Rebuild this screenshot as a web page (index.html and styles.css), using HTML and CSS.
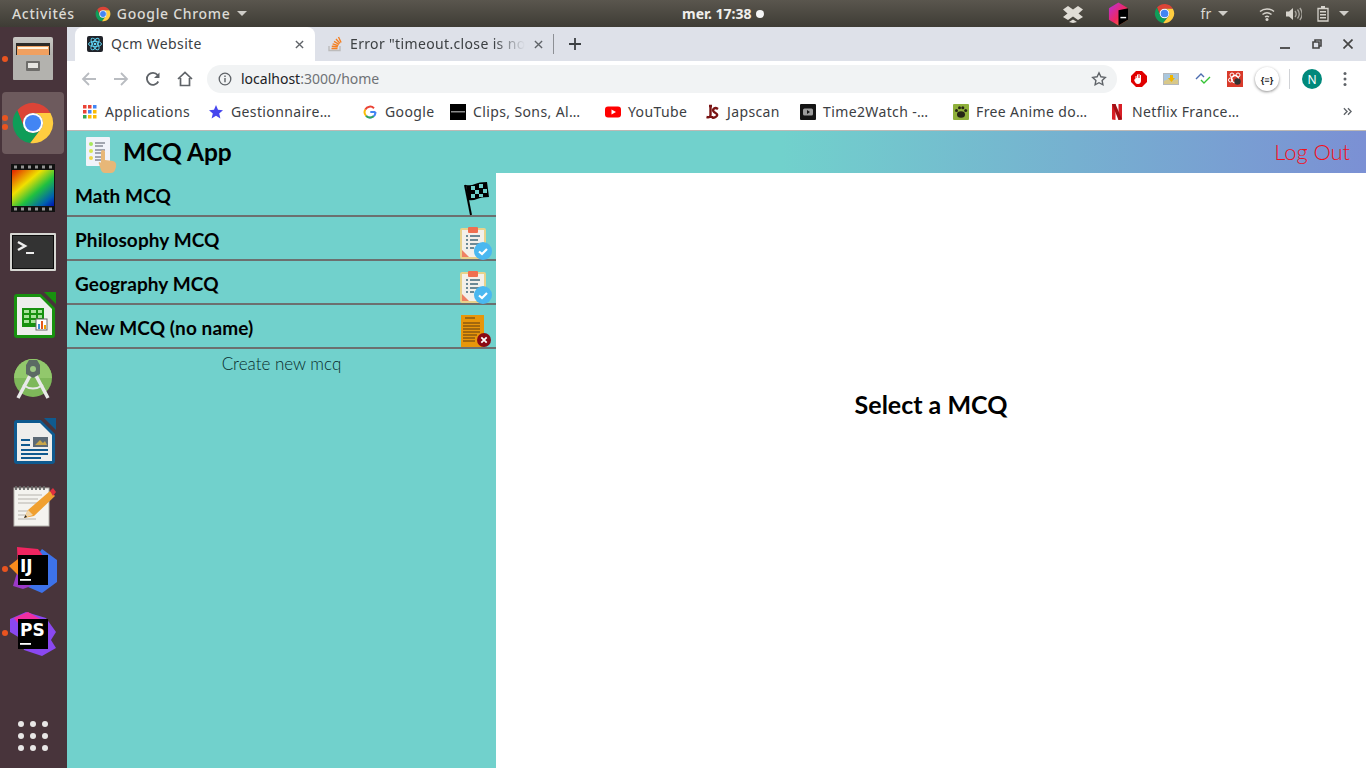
FILE: index.html
```html
<!DOCTYPE html>
<html lang="fr">
<head>
<meta charset="utf-8">
<title>Qcm Website</title>
<link rel="stylesheet" href="styles.css">
</head>
<body>
<svg class="defs" width="0" height="0">
  <symbol id="chrome" viewBox="0 0 48 48">
    <path fill="#db4437" d="M6.900 10.200A22 22 0 0 1 43.050 13H24A11 11 0 0 0 14.500 29.500Z"/>
    <path fill="#0f9d58" d="M6.900 10.200A22 22 0 0 0 21 45.800L33.500 29.500A11 11 0 0 1 14.500 29.500Z"/>
    <path fill="#ffcd40" d="M43.050 13A22 22 0 0 1 21 45.800L33.500 29.500A11 11 0 0 0 24 13Z"/>
    <circle cx="24" cy="24" r="11" fill="#fff"/>
    <circle cx="24" cy="24" r="8.800" fill="#4285f4"/>
  </symbol>
  <symbol id="done" viewBox="0 0 32 34">
    <rect x="0" y="2" width="26" height="31" rx="2" fill="#e8d28b"/>
    <rect x="2" y="4" width="22" height="27" fill="#f3f0ea"/>
    <path fill="#ef8163" d="M2 24l7 7H2z"/>
    <rect x="8" y="1" width="10" height="6" rx="1" fill="#ef6f50"/>
    <path fill="#6c8a96" d="M6 9h2v2H6zM10 9h10v2H10zM6 13h2v2H6zM10 13h8v2h-8zM6 17h2v2H6zM10 17h9v2h-9zM6 21h2v2H6zM10 21h4v2h-4z"/>
    <circle cx="23" cy="25" r="9" fill="#4ab8f0"/>
    <path d="M19 25.500l3 2.500 5-5" fill="none" stroke="#fff" stroke-width="2.200"/>
  </symbol>
</svg>

<header class="topbar">
  <div class="top-left">
    <span class="top-label">Activités</span>
    <span class="top-app"><svg class="ic14"><use href="#chrome"/></svg><span class="top-label">Google Chrome</span><i class="caret"></i></span>
  </div>
  <div class="top-clock">mer. 17:38 <i class="clock-dot"></i></div>
  <div class="top-right">
    <svg class="tray-drop" viewBox="0 0 20 18"><path fill="#e0ddd6" d="M5 1l5 3.500L15 1l5 3.500-4.500 4 4.500 3.500-5 3-5-3.500L5 15l-5-3 4.500-3.500L0 4.500zM10 14.500l4 2.500-4 1-4-1z"/></svg>
    <svg class="tray-tb" viewBox="0 0 22 24"><defs><linearGradient id="tb" x1="0" y1="0" x2="1" y2="1"><stop offset="0" stop-color="#b52fe0"/><stop offset=".55" stop-color="#f0285f"/><stop offset="1" stop-color="#ff9a20"/></linearGradient></defs><path fill="url(#tb)" d="M11 0l10 6v12l-10 6-10-6V6z"/><path fill="#000" d="M11 8l10-2v12l-10 6z"/><rect x="13" y="15" width="6" height="1.500" fill="#fff"/></svg>
    <svg class="tray-chrome"><use href="#chrome"/></svg>
    <span class="tray-lang">fr</span><i class="caret tray-caret1"></i>
    <svg class="tray-wifi" viewBox="0 0 16 14"><path fill="none" stroke="#d6d3cc" stroke-width="1.500" d="M1 4.500C5 1 11 1 15 4.500M3.500 7.500c3-2.400 6-2.400 9 0M6 10c1.300-.9 2.700-.9 4 0"/><circle cx="8" cy="12.500" r="1.500" fill="#d6d3cc"/></svg>
    <svg class="tray-vol" viewBox="0 0 16 14"><path fill="#d6d3cc" d="M0 4.500h3L7 1v12L3 9.500H0z"/><path fill="none" stroke="#a9a69f" stroke-width="1.300" d="M9 4c1.400 1.800 1.400 4.200 0 6M11.500 2.500c2.200 2.800 2.200 6.200 0 9M13.800 1c3 3.800 3 8.200 0 12"/></svg>
    <svg class="tray-bat" viewBox="0 0 12 16"><path fill="none" stroke="#d6d3cc" stroke-width="1.300" d="M1 2.500h10V15H1z"/><path fill="#d6d3cc" d="M4 0h4v2H4zM3 5h6v1.500H3zM3 8h6v1.500H3zM3 11h6v1.500H3z"/></svg>
    <i class="caret tray-caret2"></i>
  </div>
</header>

<div class="desktop">
  <nav class="dock">
    <div class="dock-item"><i class="dot"></i>
      <svg class="dock-ic lift" viewBox="0 0 48 48"><defs><linearGradient id="cab" x1="0" y1="0" x2="0" y2="1"><stop offset="0" stop-color="#c9c8c4"/><stop offset="1" stop-color="#8f8e8a"/></linearGradient></defs><rect x="4" y="2" width="40" height="43" rx="2" fill="url(#cab)"/><rect x="7" y="8" width="34" height="12" fill="#2c2a28"/><rect x="8" y="11" width="32" height="9" fill="#f0a060"/><rect x="9" y="12" width="30" height="2" fill="#fff3df"/><path fill="#b3b2ae" d="M4 20h40v24a1 1 0 0 1-1 1H5a1 1 0 0 1-1-1z"/><rect x="17" y="26" width="14" height="10" rx="1" fill="#6e6d6a"/><rect x="19" y="28" width="10" height="5" fill="#e6e5e1"/></svg>
    </div>
    <div class="dock-item active"><i class="dot"></i><i class="dot second"></i>
      <svg class="dock-chrome"><use href="#chrome"/></svg>
    </div>
    <div class="dock-item">
      <svg class="dock-ic" viewBox="0 0 48 48"><defs><linearGradient id="rb" x1="0" y1="0" x2="1" y2="1"><stop offset="0" stop-color="#e02000"/><stop offset=".35" stop-color="#f0e000"/><stop offset=".6" stop-color="#20c040"/><stop offset=".85" stop-color="#0060b0"/><stop offset="1" stop-color="#0010b0"/></linearGradient></defs><rect x="2" y="0" width="44" height="48" fill="#111"/><rect x="3" y="6" width="42" height="36" fill="url(#rb)"/><path fill="#fff" fill-opacity=".55" d="M5 1.500h3v3H5zM12 1.500h3v3h-3zM19 1.500h3v3h-3zM26 1.500h3v3h-3zM33 1.500h3v3h-3zM40 1.500h3v3h-3zM5 43.500h3v3H5zM12 43.500h3v3h-3zM19 43.500h3v3h-3zM26 43.500h3v3h-3zM33 43.500h3v3h-3zM40 43.500h3v3h-3z"/></svg>
    </div>
    <div class="dock-item">
      <svg class="dock-ic" viewBox="0 0 48 48"><rect x="1" y="5" width="46" height="38" rx="1" fill="#d6d6d2"/><rect x="3" y="7" width="42" height="34" fill="#0c0c0c"/><rect x="4" y="8" width="40" height="32" fill="#333"/><path d="M9 14l7 4-7 4" fill="none" stroke="#eee" stroke-width="2.500"/><rect x="17" y="24" width="8" height="2" fill="#eee"/></svg>
    </div>
    <div class="dock-item">
      <svg class="dock-ic" viewBox="0 0 48 48"><path fill="#18910f" d="M5 5a3 3 0 0 1 3-3h24l14 14v27a3 3 0 0 1-3 3H8a3 3 0 0 1-3-3z"/><path fill="#48343b" d="M30 0h18v17z"/><path fill="#18910f" d="M35 0h12v12z"/><path fill="#eeeeec" d="M8 5h23l12 12v26H8z"/><rect x="13" y="16" width="22" height="19" fill="#18910f"/><path fill="#a9e39b" d="M15 18h5v3h-5zM22 18h5v3h-5zM29 18h4v3h-4zM15 23h5v3h-5zM22 23h5v3h-5zM29 23h4v3h-4zM15 28h5v3h-5zM22 28h5v3h-5z"/><rect x="27" y="27" width="11" height="11" fill="#fff" stroke="#666"/><path fill="#3a8ed0" d="M29 32h2v5h-2z"/><path fill="#e4571c" d="M32 29h2v8h-2z"/><path fill="#f0a000" d="M35 33h2v4h-2z"/></svg>
    </div>
    <div class="dock-item tight">
      <svg class="dock-ic" viewBox="0 0 48 48"><circle cx="24" cy="24" r="19" fill="#7eb85a"/><path fill="#92c86c" d="M5 24a19 19 0 0 1 38 0z"/><path d="M9 44l15-28 15 28" fill="none" stroke="#e8e8e8" stroke-width="3.500"/><path d="M14 31q10 7 20 0" fill="none" stroke="#e8e8e8" stroke-width="2"/><path fill="#5c6a64" d="M20 6h8l3 5v9l-7 4-7-4v-9z"/><circle cx="24" cy="15" r="3" fill="#9dc983"/></svg>
    </div>
    <div class="dock-item">
      <svg class="dock-ic" viewBox="0 0 48 48"><path fill="#0f5a8f" d="M5 5a3 3 0 0 1 3-3h24l14 14v27a3 3 0 0 1-3 3H8a3 3 0 0 1-3-3z"/><path fill="#48343b" d="M30 0h18v17z"/><path fill="#0f5a8f" d="M35 0h12v12z"/><path fill="#eeeeec" d="M8 5h23l12 12v26H8z"/><path fill="#0f5a8f" d="M12 21h9v2h-9zM12 26h9v2h-9zM12 31h27v2H12zM12 35h27v2H12zM12 39h20v2H12z"/><rect x="24" y="19" width="15" height="10" fill="#5c6a75"/><path fill="#c9a64a" d="M26 27l5-5 3 3 2-2 2 4z"/></svg>
    </div>
    <div class="dock-item">
      <svg class="dock-ic" viewBox="0 0 48 48"><rect x="5" y="6" width="35" height="38" fill="#f4f3ef" stroke="#b5b4ae"/><path d="M7 4v4M11 4v4M15 4v4M19 4v4M23 4v4M27 4v4M31 4v4M35 4v4" stroke="#666" stroke-width="1.800"/><path d="M9 13h24M9 17h20M9 21h22M9 29h16M9 33h12M9 37h18" stroke="#b5b4ae" stroke-width="1.200"/><path d="M15 36l4-8 22-19 5 5-21 20z" fill="#f0a030"/><path d="M41 9l3-3 3 4-3 4z" fill="#e03040"/><path d="M15 36l4-8 5 5z" fill="#f1d5a8"/><path d="M15 36l1.500-3 1.500 2z" fill="#222"/></svg>
    </div>
    <div class="dock-item"><i class="dot"></i>
      <svg class="dock-ic" viewBox="0 0 48 48"><path fill="#3d72ea" d="M33 3l15 11 0 22-15 11-14-6 8-30z"/><path fill="#f02560" d="M8 1l21 2 6 8-12 18-14-4z"/><path fill="#9b39c7" d="M4 40l6-20 12 20-8 3z"/><path fill="#f98c1c" d="M0 20l9-7 10 5-9 12z"/><rect x="9" y="9" width="30" height="30" fill="#000"/><text class="jb-text" x="11" y="26">IJ</text><rect x="11" y="33" width="11" height="1.800" fill="#fff"/></svg>
    </div>
    <div class="dock-item"><i class="dot"></i>
      <svg class="dock-ic" viewBox="0 0 48 48"><path fill="#8a48f0" d="M1 9l16-7 20 6 10 14-5 8 5 8-14 8-18-6-4-12-10-6z"/><path fill="#f02fa0" d="M5 8l14-6 14 8-14 16z"/><rect x="9" y="9" width="30" height="30" fill="#000"/><text class="jb-text" x="11" y="26">PS</text><rect x="11" y="33" width="11" height="1.800" fill="#fff"/></svg>
    </div>
    <div class="dock-grid"><i></i><i></i><i></i><i></i><i></i><i></i><i></i><i></i><i></i></div>
  </nav>

  <div class="window">
    <div class="tabstrip">
      <div class="tab tab-active">
        <svg class="ic16" viewBox="0 0 16 16"><rect width="16" height="16" rx="2" fill="#20232a"/><g fill="none" stroke="#61dafb" stroke-width=".9"><ellipse cx="8" cy="8" rx="6.500" ry="2.600"/><ellipse cx="8" cy="8" rx="6.500" ry="2.600" transform="rotate(60 8 8)"/><ellipse cx="8" cy="8" rx="6.500" ry="2.600" transform="rotate(120 8 8)"/></g><circle cx="8" cy="8" r="1.300" fill="#61dafb"/></svg>
        <span class="tab-title">Qcm Website</span>
        <svg class="tab-x" viewBox="0 0 10 10"><path d="M1 1l8 8M9 1l-8 8" stroke="#5f6368" stroke-width="1.500"/></svg>
      </div>
      <div class="tab tab-other">
        <svg class="ic16" viewBox="0 0 16 16"><path fill="none" stroke="#bcbbbb" stroke-width="1.400" d="M2 10v4.500h11V10"/><path fill="none" stroke="#f48024" stroke-width="1.400" d="M4.500 12.500h6M4.800 10.200l6 .6M5.600 7.800l5.700 1.800M7 5.300l5.100 3M9 3l4 4.400M11.500 1l2.600 5.500"/></svg>
        <span class="tab-title tab-fade">Error "timeout.close is no</span>
        <svg class="tab-x" viewBox="0 0 10 10"><path d="M1 1l8 8M9 1l-8 8" stroke="#5f6368" stroke-width="1.500"/></svg>
      </div>
      <i class="tab-sep"></i>
      <svg class="tab-plus" viewBox="0 0 12 12"><path d="M6 0v12M0 6h12" stroke="#3c4043" stroke-width="1.800"/></svg>
      <div class="win-ctrl">
        <svg class="win-btn" viewBox="0 0 10 10"><path d="M0 9h10" stroke="#444" stroke-width="1.800"/></svg>
        <svg class="win-btn" viewBox="0 0 10 10"><path fill="none" stroke="#444" stroke-width="1.600" d="M3 3V1h6v6H7M1 3h6v6H1z"/></svg>
        <svg class="win-btn" viewBox="0 0 10 10"><path d="M.5.500l9 9M9.500.500l-9 9" stroke="#444" stroke-width="1.700"/></svg>
      </div>
    </div>

    <div class="toolbar">
      <svg class="nav-ic first" viewBox="0 0 16 16"><path d="M15 8H2M8 2L2 8l6 6" fill="none" stroke="#b9bcc1" stroke-width="1.800"/></svg>
      <svg class="nav-ic" viewBox="0 0 16 16"><path d="M1 8h13M8 2l6 6-6 6" fill="none" stroke="#b9bcc1" stroke-width="1.800"/></svg>
      <svg class="nav-ic" viewBox="0 0 16 16"><path d="M13.300 10.500A6 6 0 1 1 12.600 4" fill="none" stroke="#5f6368" stroke-width="1.800"/><path fill="#5f6368" d="M14.500 1.500v5.500H9z"/></svg>
      <svg class="nav-ic" viewBox="0 0 16 16"><path d="M1 8l7-6.500L15 8M3.500 7v7.500h9V7" fill="none" stroke="#5f6368" stroke-width="1.700"/></svg>
      <div class="omnibox">
        <svg class="ic14" viewBox="0 0 14 14"><circle cx="7" cy="7" r="5.800" fill="none" stroke="#5f6368" stroke-width="1.300"/><path d="M6.300 6h1.400v4.200H6.300zM6.300 3.600h1.400V5H6.300z" fill="#5f6368"/></svg>
        <span class="url">localhost<span class="url-dim">:3000/home</span></span>
        <svg class="star" viewBox="0 0 16 16"><path d="M8 1.800l1.900 4 4.400.6-3.200 3 .8 4.400L8 11.700l-3.900 2.100.8-4.400-3.200-3 4.400-.6z" fill="none" stroke="#5f6368" stroke-width="1.400"/></svg>
      </div>
      <div class="ext-row">
        <svg class="ext" viewBox="0 0 16 16"><path fill="#e00000" d="M5 0h6l5 5v6l-5 5H5l-5-5V5z"/><path fill="#fff" d="M4.500 7V5h1v2h.5V3.500h1V7h.5V3h1v4h.5V4h1v5.500c0 2-1 3.500-3 3.500S4.500 12 3.500 10L3 8.500h1z"/></svg>
        <svg class="ext" viewBox="0 0 16 16"><rect y="2" width="16" height="12" fill="#b4b8bc"/><rect x="1" y="3" width="14" height="10" fill="#a9c7de"/><path fill="#d8c88a" d="M1 10l4-2 4 2 6-2v5H1z"/><path fill="#f0b400" d="M7 4h3v3h2l-3.500 4L5 7h2z"/></svg>
        <svg class="ext" viewBox="0 0 16 16"><path d="M1 8l5-5 3 3" fill="none" stroke="#4b6cb0" stroke-width="1.400"/><path d="M6 9l3 3 6-6" fill="none" stroke="#35c435" stroke-width="1.400"/></svg>
        <svg class="ext" viewBox="0 0 16 16"><rect width="16" height="16" fill="#d93a2b"/><circle cx="8" cy="8" r="3.500" fill="none" stroke="#fff" stroke-width="1.300"/><circle cx="5" cy="4" r="2" fill="none" stroke="#fff"/><circle cx="11" cy="4" r="2" fill="none" stroke="#fff"/><circle cx="3.500" cy="9" r="2" fill="none" stroke="#fff"/><circle cx="10.500" cy="10.500" r="3.200" fill="#333"/></svg>
        <span class="ext-json">{≡}</span>
        <i class="ext-sep"></i>
        <span class="avatar">N</span>
        <svg class="menu-dots" viewBox="0 0 4 16"><circle cx="2" cy="2.500" r="1.500" fill="#5f6368"/><circle cx="2" cy="8" r="1.500" fill="#5f6368"/><circle cx="2" cy="13.500" r="1.500" fill="#5f6368"/></svg>
      </div>
    </div>

    <div class="bookmarks">
      <div class="bm"><svg class="ic14 bm-apps" viewBox="0 0 14 14"><path fill="#ea4335" d="M0 0h3.500v3.500H0zM5 0h3.500v3.500H5z"/><path fill="#4285f4" d="M10 0h3.500v3.500H10zM5 5h3.500v3.500H5z"/><path fill="#ea4335" d="M0 5h3.500v3.500H0z"/><path fill="#fbbc04" d="M10 5h3.500v3.500H10zM5 10h3.500v3.500H5zM10 10h3.500v3.500H10z"/><path fill="#34a853" d="M0 10h3.500v3.500H0z"/></svg><span>Applications</span></div>
      <div class="bm"><svg class="ic16" viewBox="0 0 16 16"><path fill="#4646ee" d="M8 1l2 4.800 5 .4-3.800 3.300 1.200 5L8 11.800l-4.400 2.700 1.200-5L1 6.200l5-.4z"/></svg><span>Gestionnaire…</span></div>
      <div class="bm"><svg class="ic14" viewBox="0 0 14 14"><path d="M12.500 7H7.300M12.500 7a5.500 5.500 0 0 1-9.400 3.900" fill="none" stroke="#4285f4" stroke-width="2"/><path d="M3.100 10.900A5.500 5.500 0 0 1 2.300 4.500" fill="none" stroke="#fbbc04" stroke-width="2"/><path d="M2.300 4.500A5.500 5.500 0 0 1 11 3.200" fill="none" stroke="#ea4335" stroke-width="2"/><path d="M3.100 10.900a5.500 5.500 0 0 0 7.400.4" fill="none" stroke="#34a853" stroke-width="2"/></svg><span>Google</span></div>
      <div class="bm"><svg class="ic16" viewBox="0 0 16 16"><rect width="16" height="16" fill="#000"/><rect x="1" y="7" width="14" height="1.500" fill="#8a8a8a"/></svg><span>Clips, Sons, Al…</span></div>
      <div class="bm"><svg class="ic16" viewBox="0 0 16 16"><rect y="2.500" width="16" height="11" rx="3" fill="#f00"/><path fill="#fff" d="M6.500 5.500L11 8l-4.500 2.500z"/></svg><span>YouTube</span></div>
      <div class="bm"><svg class="ic16" viewBox="0 0 16 16"><path d="M5 2h3M6.500 2v9q0 3-4 2M14 5q-3-2-4.500 0t2 4 0 4-3.500-1" fill="none" stroke="#7a1414" stroke-width="2.400"/></svg><span>Japscan</span></div>
      <div class="bm"><svg class="ic16" viewBox="0 0 16 16"><rect width="16" height="16" rx="1" fill="#141414"/><rect x="3" y="4.500" width="10" height="7" rx="1.500" fill="#9c9c9c"/><path fill="#141414" d="M7 6l3 2-3 2z"/></svg><span>Time2Watch -…</span></div>
      <div class="bm"><svg class="ic16" viewBox="0 0 16 16"><rect width="16" height="16" rx="1" fill="#8fb03a"/><ellipse cx="8" cy="10.500" rx="4" ry="3.200" fill="#262616"/><circle cx="3.500" cy="6.500" r="1.500" fill="#262616"/><circle cx="6.500" cy="3.800" r="1.500" fill="#262616"/><circle cx="9.800" cy="3.800" r="1.500" fill="#262616"/><circle cx="12.700" cy="6.500" r="1.500" fill="#262616"/></svg><span>Free Anime do…</span></div>
      <div class="bm"><svg class="ic16" viewBox="0 0 16 16"><path fill="#d81f26" d="M3 0h3.500v16L3 15.500z"/><path fill="#d81f26" d="M9.500 0H13v15.500L9.500 16z"/><path fill="#a00f14" d="M3 0h3.500l6.500 15.500-3.500.5z"/></svg><span>Netflix France…</span></div>
      <svg class="bm-more" viewBox="0 0 10 10"><path d="M1 1.500L4.500 5 1 8.500M5.500 1.500L9 5 5.500 8.500" fill="none" stroke="#5f6368" stroke-width="1.500"/></svg>
    </div>

    <div class="app">
      <header class="app-head">
        <div class="brand">
          <svg class="brand-ic" viewBox="0 0 33 36"><rect x="1" y="0" width="24" height="29" rx="1" fill="#f1f3fa"/><circle cx="6" cy="7" r="2" fill="#a8e85c"/><circle cx="6" cy="14" r="2" fill="#d8e850"/><circle cx="6" cy="21" r="2" fill="#f0d848"/><path d="M10 6h10M10 9h8M10 13h10M10 16h8M10 20h10M10 23h6" stroke="#555a66" stroke-width="1.200"/><path fill="#e7b778" d="M16 15a2 2 0 0 1 4 0v8l8 1q4 1 3 6l-1 3q-1 3-4 3h-6q-3 0-4-3l-2-6q-1-2 1-2l1 1z"/></svg>
          <span class="brand-name">MCQ App</span>
        </div>
        <a class="logout">Log Out</a>
      </header>
      <div class="app-body">
        <aside class="sidebar">
          <div class="mcq-row"><span>Math MCQ</span>
            <svg class="flag" viewBox="0 0 26 36"><path d="M2 5l6 30" stroke="#000" stroke-width="2"/><path fill="#000" d="M3 5q5 1 9-1t12-2l2 15q-8 0-12 2t-9 1z"/><path fill="#6fcfca" d="M8 6h4v4H8zM16 4h4v4h-4zM12 10h4v4h-4zM20 9h4v4h-4zM8 14h4v4H8zM16 14h4v3h-4z"/></svg>
          </div>
          <div class="mcq-row"><span>Philosophy MCQ</span><svg class="status"><use href="#done"/></svg></div>
          <div class="mcq-row"><span>Geography MCQ</span><svg class="status"><use href="#done"/></svg></div>
          <div class="mcq-row"><span>New MCQ (no name)</span>
            <svg class="status" viewBox="0 0 32 34"><rect x="1" y="1" width="23" height="32" fill="#e8960a"/><path d="M5 4h10M3 9h17M3 12h17M3 15h17M3 18h17M3 21h14M3 24h12M3 27h12" stroke="#8a5a10" stroke-width="1.400"/><circle cx="24" cy="26" r="7" fill="#8b0a14"/><path d="M21.300 23.300l5.400 5.400M26.700 23.300l-5.400 5.400" stroke="#fff" stroke-width="1.800"/></svg>
          </div>
          <a class="create">Create new mcq</a>
        </aside>
        <main class="content"><h1 class="select">Select a MCQ</h1></main>
      </div>
    </div>
  </div>
</div>
</body>
</html>
```
FILE: styles.css
```css
* { box-sizing: border-box; }
html, body { margin: 0; height: 100%; overflow: hidden; }
body { width: 1366px; height: 768px; font-family: "Noto Sans", sans-serif; display: flex; flex-direction: column; }
.defs { position: absolute; }
svg { display: block; flex: none; }
i { display: block; }
.ic14 { width: 14px; height: 14px; }
.ic16 { width: 16px; height: 16px; }

/* GNOME top bar */
.topbar { height: 27px; flex: none; display: flex; align-items: center; background: linear-gradient(#5a564e, #3e3c35); color: #dcdad5; font-size: 14px; }
.top-left { width: 682px; display: flex; align-items: center; padding-left: 12px; gap: 20px; }
.top-label { font-weight: 500; letter-spacing: .7px; }
.top-app { display: flex; align-items: center; gap: 6px; }
.top-app .ic14 { width: 16px; height: 16px; }
.caret { width: 0; height: 0; border-left: 5px solid transparent; border-right: 5px solid transparent; border-top: 5px solid #cfcdc8; }
.top-app .caret { margin-left: 0; }
.top-clock { display: flex; align-items: center; gap: 4px; font-weight: 700; font-size: 14px; color: #f0efec; }
.clock-dot { width: 8px; height: 8px; border-radius: 50%; background: #f5f5f5; }
.top-right { flex: 1; display: flex; align-items: center; height: 100%; padding-left: 299px; }
.tray-drop { width: 20px; height: 18px; }
.tray-tb { width: 21px; height: 24px; margin-left: 25px; }
.tray-chrome { width: 21px; height: 21px; margin-left: 25px; }
.tray-lang { margin-left: 26px; font-size: 14px; width: 12px; }
.tray-caret1 { margin-left: 5px; }
.tray-wifi { width: 16px; height: 14px; margin-left: 31px; }
.tray-vol { width: 16px; height: 14px; margin-left: 11px; }
.tray-bat { width: 12px; height: 16px; margin-left: 15px; }
.tray-caret2 { margin-left: 10px; }

/* Ubuntu dock */
.desktop { flex: 1; display: flex; min-height: 0; }
.dock { width: 67px; flex: none; background: #48343b; display: flex; flex-direction: column; align-items: flex-start; padding: 1px 0 0 2px; position: relative; }
.dock-item { width: 62px; height: 64px; flex: none; display: flex; align-items: center; justify-content: center; position: relative; border-radius: 4px; }
.dock-item.active { background: #6d5a5d; height: 62px; margin-bottom: 2px; }
.dock-item.tight { margin-top: -2px; }
.dock-ic { width: 48px; height: 48px; }
.dock-ic.lift { margin-top: -3px; }
.dock-chrome { width: 44px; height: 44px; }
.dot { position: absolute; left: 0; top: 28px; width: 6px; height: 6px; border-radius: 50%; background: #e95420; }
.active .dot { top: 23px; }
.active .dot.second { top: 32px; }
.jb-text { font: 700 17px "DejaVu Sans", sans-serif; fill: #fff; }
.dock-grid { position: absolute; left: 18px; top: 694px; width: 30px; display: grid; grid-template-columns: repeat(3, 6px); gap: 6px; }
.dock-grid i { width: 6px; height: 6px; border-radius: 50%; background: #e8e6e6; }

/* Chrome window */
.window { flex: 1; min-width: 0; display: flex; flex-direction: column; background: #fff; }
.tabstrip { height: 34px; flex: none; background: #dee1e9; display: flex; align-items: center; padding-left: 8px; }
.tab { height: 34px; display: flex; align-items: center; font-size: 14px; letter-spacing: .35px; color: #3c4043; }
.tab-active { width: 240px; background: #fff; border-radius: 8px 8px 0 0; padding: 0 11px 0 12px; gap: 8px; }
.tab-other { width: 239px; padding: 0 11px 0 12px; gap: 7px; }
.tab-title { flex: 1; white-space: nowrap; min-width: 0; padding-bottom: 2px; }
.tab-fade { -webkit-mask-image: linear-gradient(90deg, #000 82%, transparent); mask-image: linear-gradient(90deg, #000 82%, transparent); }
.tab-x { width: 9px; height: 9px; margin-left: 2px; }
.tab-sep { width: 1px; height: 20px; background: #8d9095; margin-left: -1px; }
.tab-plus { width: 12px; height: 12px; margin-left: 15px; }
.win-ctrl { margin-left: auto; display: flex; align-items: center; gap: 21px; height: 100%; padding-right: 13px; }
.win-btn { width: 10px; height: 10px; }
.win-btn:first-child { margin-right: 1px; }
.toolbar { height: 34px; flex: none; display: flex; align-items: center; padding: 4px 0 2px; }
.nav-ic { width: 16px; height: 16px; margin-left: 16px; }
.nav-ic.first { margin-left: 14px; }
.omnibox { width: 910px; height: 28px; margin-left: 14px; border-radius: 14px; background: #f1f3f4; display: flex; align-items: center; padding: 0 10px 0 11px; font-size: 14px; }
.url { margin-left: 9px; color: #202124; flex: 1; padding-bottom: 2px; }
.url-dim { color: #6f7276; }
.star { width: 16px; height: 16px; }
.ext-row { display: flex; align-items: center; flex: 1; padding-left: 14px; }
.ext { width: 16px; height: 16px; margin-right: 16px; }
.ext-json { width: 24px; height: 24px; border-radius: 50%; background: #fff; box-shadow: 0 1px 3px rgba(0,0,0,.45); font-size: 9px; font-weight: 700; color: #222; display: flex; align-items: center; justify-content: center; margin-left: -4px; }
.ext-sep { width: 1px; height: 20px; background: #d0d2d6; margin-left: 10px; }
.avatar { width: 20px; height: 20px; border-radius: 50%; background: #00897b; color: #fff; font-size: 12px; display: flex; align-items: center; justify-content: center; margin-left: 12px; }
.menu-dots { width: 4px; height: 16px; margin-left: 21px; }
.bookmarks { height: 36px; flex: none; display: grid; grid-template-columns: 126px 154px 88px 155px 99px 96px 153px 156px 234px 10px; align-items: center; padding: 0 0 2px 15px; border-bottom: 1px solid #bdb9b5; font-size: 14px; letter-spacing: .38px; color: #3c4043; }
.bm { display: flex; align-items: center; gap: 7px; white-space: nowrap; }
.bm .ic14 { margin: 0 1px; }
.bm-more { width: 9px; height: 9px; }

/* MCQ app */
.app { flex: 1; min-height: 0; display: flex; flex-direction: column; }
.app-head { height: 42px; flex: none; display: flex; align-items: center; justify-content: space-between; padding: 0 16px 0 18px; background: linear-gradient(90deg, #71d1cc 55%, #7b90d4 100%); }
.brand { display: flex; align-items: center; gap: 5px; }
.brand-ic { width: 33px; height: 36px; margin-top: 6px; }
.brand-name { font: 700 24.500px Lato, sans-serif; color: #000; padding-bottom: 2px; }
.logout { font: 300 22px Lato, sans-serif; color: #f2101c; letter-spacing: -.1px; padding-bottom: 2px; }
.app-body { flex: 1; min-height: 0; display: flex; }
.sidebar { width: 429px; flex: none; background: #71d1cc; display: flex; flex-direction: column; }
.mcq-row { height: 44px; flex: none; display: flex; align-items: center; justify-content: space-between; padding: 2px 4px 0 8px; border-bottom: 2px solid #6c706f; font: 700 19px Lato, sans-serif; letter-spacing: .1px; color: #000; }
.status { width: 32px; height: 34px; margin-top: 7px; }
.flag { width: 26px; height: 36px; margin: 6px 3px 0 0; }
.create { font: 300 17px Lato, sans-serif; text-align: center; color: #062a2a; padding-top: 4px; }
.content { flex: 1; min-width: 0; display: flex; justify-content: center; background: #fff; }
.select { margin: 216px 0 0; font: 700 25px Lato, sans-serif; color: #000; line-height: 30px; height: 30px; }
```
